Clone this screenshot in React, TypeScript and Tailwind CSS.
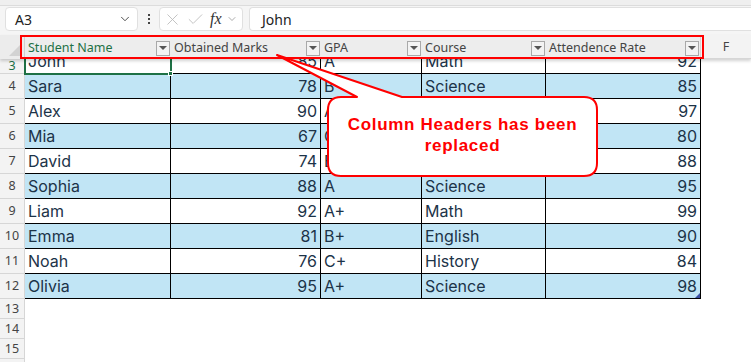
import { ChevronDown, X, Check } from "lucide-react";

type Row = {
  n: number;
  name: string;
  marks: number;
  gpa: string;
  course: string;
  rate: number;
};

const rows: Row[] = [
  { n: 4, name: "Sara", marks: 78, gpa: "B", course: "Science", rate: 85 },
  { n: 5, name: "Alex", marks: 90, gpa: "A", course: "English", rate: 97 },
  { n: 6, name: "Mia", marks: 67, gpa: "C", course: "History", rate: 80 },
  { n: 7, name: "David", marks: 74, gpa: "B", course: "Math", rate: 88 },
  { n: 8, name: "Sophia", marks: 88, gpa: "A", course: "Science", rate: 95 },
  { n: 9, name: "Liam", marks: 92, gpa: "A+", course: "Math", rate: 99 },
  { n: 10, name: "Emma", marks: 81, gpa: "B+", course: "English", rate: 90 },
  { n: 11, name: "Noah", marks: 76, gpa: "C+", course: "History", rate: 84 },
  { n: 12, name: "Olivia", marks: 95, gpa: "A+", course: "Science", rate: 98 },
];

const headers = [
  { label: "Student Name", w: "w-[146px]", active: true },
  { label: "Obtained Marks", w: "w-[150px]", active: false },
  { label: "GPA", w: "w-[101px]", active: false },
  { label: "Course", w: "w-[124px]", active: false },
  { label: "Attendence Rate", w: "w-[154px]", active: false },
];

const cellFont = "font-['Inter',sans-serif] text-[16px] text-[#1c3348]";

function FilterButton() {
  return (
    <div className="flex h-[15px] w-[14px] items-center justify-center border border-[#a9a9a9] bg-[#f3f3f3]">
      <div className="h-0 w-0 border-x-[4px] border-t-[4px] border-x-transparent border-t-[#555]" />
    </div>
  );
}

function Cells({ r, bg }: { r: Omit<Row, "n"> & { n: number }; bg: string }) {
  return (
    <div className={`flex h-[25px] ${bg} border-b border-black`}>
      <div className={`w-[146px] border-r border-black pl-[3px] leading-[24px] ${cellFont}`}>{r.name}</div>
      <div className={`w-[150px] border-r border-black pr-[3px] text-right leading-[24px] ${cellFont}`}>{r.marks}</div>
      <div className={`w-[101px] border-r border-black pl-[3px] leading-[24px] ${cellFont}`}>{r.gpa}</div>
      <div className={`w-[124px] border-r border-black pl-[3px] leading-[24px] ${cellFont}`}>{r.course}</div>
      <div className={`relative w-[155px] border-r border-black pr-[3px] text-right leading-[24px] ${cellFont}`}>
        {r.rate}
        {r.n === 12 ? (
          <div className="absolute bottom-0 right-0 h-0 w-0 border-b-[5px] border-l-[5px] border-b-[#3b4fa3] border-l-transparent" />
        ) : null}
      </div>
    </div>
  );
}

function DataRow({ r }: { r: Row }) {
  const bg = r.n % 2 === 0 ? "bg-[#c1e5f5]" : "bg-white";
  return (
    <div className="flex h-[25px]">
      <div className="flex h-[25px] w-[25px] shrink-0 items-center justify-center border-b border-r border-[#d6d6d6] bg-[#f3f3f3] pt-[1px] font-['Noto_Sans',sans-serif] text-[12.5px] text-[#444]">
        {r.n}
      </div>
      <Cells r={r} bg={bg} />
    </div>
  );
}

export default function App() {
  return (
    <div className="relative h-[362px] w-[751px] overflow-hidden bg-white">
      {/* formula bar */}
      <div className="h-[6px] border-b border-[#dcdcdc] bg-[#efefef]" />
      <div className="flex h-[29px] items-start bg-[#f5f5f5] pt-[1px] font-['Noto_Sans',sans-serif] text-[14px] text-[#222]">
        <div className="ml-[5px] flex h-[24px] w-[133px] items-center justify-between rounded-[4px] border border-[#e0e0e0] bg-white pl-[9px] pr-[5px]">
          <span>A3</span>
          <ChevronDown size={14} strokeWidth={1.6} className="text-[#444]" />
        </div>
        <div className="flex h-[24px] w-[21px] flex-col items-center justify-center gap-[2px]">
          <div className="h-[2px] w-[2px] bg-[#444]" />
          <div className="h-[2px] w-[2px] bg-[#444]" />
          <div className="h-[2px] w-[2px] bg-[#444]" />
        </div>
        <div className="flex h-[24px] w-[84px] items-center rounded-[4px] border border-[#e0e0e0] bg-white pl-[3px] text-[#bbb]">
          <X size={19} strokeWidth={1.1} />
          <Check size={19} strokeWidth={1.1} className="ml-[4px]" />
          <span className="ml-[5px] font-['Liberation_Serif',serif] text-[16px] italic text-[#333]">fx</span>
          <ChevronDown size={12} strokeWidth={1.4} className="ml-[4px] text-[#888]" />
        </div>
        <div className="ml-[6px] flex h-[24px] flex-1 items-center rounded-l-[4px] border border-r-0 border-[#e0e0e0] bg-white pl-[12px]">
          John
        </div>
      </div>

      {/* column header row (table headers) */}
      <div className="relative z-10 flex h-[24px] bg-[#efefef] shadow-[0_2px_3px_rgba(0,0,0,0.18)]">
        <div className="relative w-[25px] shrink-0 border-r border-[#d0d0d0] bg-[#ececec]">
          <div className="absolute bottom-[3px] right-[3px] h-0 w-0 border-b-[12px] border-l-[12px] border-b-[#d2d2d2] border-l-transparent" />
        </div>
        {headers.map((h) => (
          <div
            key={h.label}
            className={`flex ${h.w} items-center justify-between bg-[#ededed] pl-[3px] pr-[1px] pt-[2px] font-['Noto_Sans',sans-serif] text-[12.5px] ${
              h.active ? "text-[#1e7145]" : "text-[#444]"
            }`}
          >
            <span>{h.label}</span>
            <FilterButton />
          </div>
        ))}
        <div className="flex flex-1 items-center justify-center border-b border-l border-[#d6d6d6] bg-[#f3f3f3] pt-[2px] font-['Noto_Sans',sans-serif] text-[12.5px] text-[#444]">
          F
        </div>
      </div>

      {/* row 3, partly under the header */}
      <div className="flex h-[15px] overflow-hidden">
        <div className="flex h-[15px] w-[25px] shrink-0 items-center justify-center border-b border-r border-[#d6d6d6] bg-[#f3f3f3] pt-[1px] font-['Noto_Sans',sans-serif] text-[12.5px] leading-none text-[#1e7145]">
          3
        </div>
        <div className="flex flex-col justify-end">
          <Cells r={{ n: 3, name: "John", marks: 85, gpa: "A", course: "Math", rate: 92 }} bg="bg-white" />
        </div>
      </div>

      {rows.map((r) => (
        <DataRow key={r.n} r={r} />
      ))}

      {[13, 14, 15, 16].map((n) => (
        <div key={n} className="flex h-[20px]">
          <div className="flex h-[20px] w-[25px] shrink-0 items-center justify-center border-b border-r border-[#d6d6d6] bg-[#f3f3f3] pt-[2px] font-['Noto_Sans',sans-serif] text-[12.5px] text-[#444]">
            {n}
          </div>
        </div>
      ))}

      {/* A3 selection */}
      <div className="pointer-events-none absolute left-[24px] top-[57px] h-[18px] w-[148px] border-2 border-[#1e7145]" />
      <div className="absolute left-[168px] top-[71px] h-[5px] w-[5px] border border-white bg-[#1e7145]" />

      {/* annotation */}
      <div className="pointer-events-none absolute left-[20px] top-[35px] z-20 h-[24px] w-[684px] border-2 border-[#ff0000]" />
      <svg className="pointer-events-none absolute left-0 top-0 z-20" width="751" height="362">
        <path
          d="M 341 97 L 357 97 L 277 55 L 402 97 L 584 97 Q 597 97 597 110 L 597 163 Q 597 176 584 176 L 341 176 Q 328 176 328 163 L 328 110 Q 328 97 341 97 Z"
          fill="white"
          stroke="#ff0000"
          strokeWidth="2"
          strokeLinejoin="round"
        />
      </svg>
      <div className="absolute left-[328px] top-[97px] z-30 flex h-[79px] w-[269px] flex-col items-center justify-center pb-[4px] font-['Liberation_Sans',sans-serif] text-[17px] font-bold leading-[21px] tracking-[0.7px] text-[#ff0000]">
        <span>Column Headers has been</span>
        <span>replaced</span>
      </div>
    </div>
  );
}
